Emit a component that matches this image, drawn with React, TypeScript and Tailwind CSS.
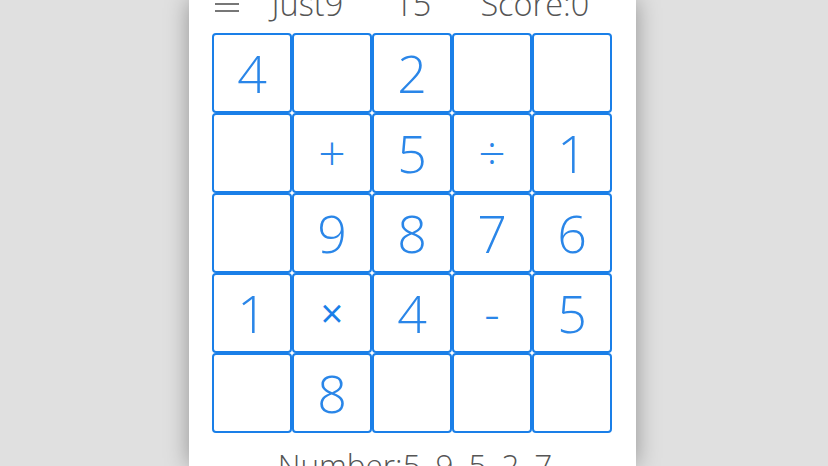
const cells: string[][] = [
  ['4', '', '2', '', ''],
  ['', '+', '5', '÷', '1'],
  ['', '9', '8', '7', '6'],
  ['1', '×', '4', '-', '5'],
  ['', '8', '', '', ''],
]

function Cell({ value }: { value: string }) {
  const isOp = value === '+' || value === '÷' || value === '-'
  const isTimes = value === '×'
  return (
    <div className="flex h-[80px] w-[80px] items-center justify-center rounded-[4px] border-[2.5px] border-[#1a7fe8] bg-white">
      <span
        className={
          isTimes
            ? 'text-[40px] font-normal leading-none text-[#1a7fe8]'
            : isOp
              ? 'text-[48px] font-light leading-none text-[#2a86e8]'
              : 'text-[52px] font-light leading-none text-[#2a86e8]'
        }
      >
        {value}
      </span>
    </div>
  )
}

export default function App() {
  return (
    <div
      className="flex h-[466px] justify-center overflow-hidden bg-[#e0e0e0] pr-[4px]"
      style={{ fontFamily: '"Open Sans", "Liberation Sans", sans-serif' }}
    >
      <div className="flex w-[447px] flex-col items-center bg-white shadow-[0_0_22px_rgba(0,0,0,0.35)]">
        {/* header, scrolled partly out of view */}
        <div className="-mt-[12px] flex w-full items-end pl-[26px] text-[32.5px] font-light leading-none text-[#555]">
          <div className="mb-[9px] flex w-[24px] flex-col gap-[5px]">
            <div className="h-[2px] bg-[#777]" />
            <div className="h-[2px] bg-[#777]" />
          </div>
          <span className="ml-[33px]">Just9</span>
          <span className="ml-[51px]">15</span>
          <span className="ml-[49px]">Score:0</span>
        </div>

        <div className="mt-[12px] grid grid-cols-5">
          {cells.flat().map((v, i) => (
            <Cell key={i} value={v} />
          ))}
        </div>

        <div className="mt-[16px] pl-[6px] text-[31.5px] font-light leading-none text-[#555]">
          Number:5, 9, 5, 2, 7
        </div>
      </div>
    </div>
  )
}
